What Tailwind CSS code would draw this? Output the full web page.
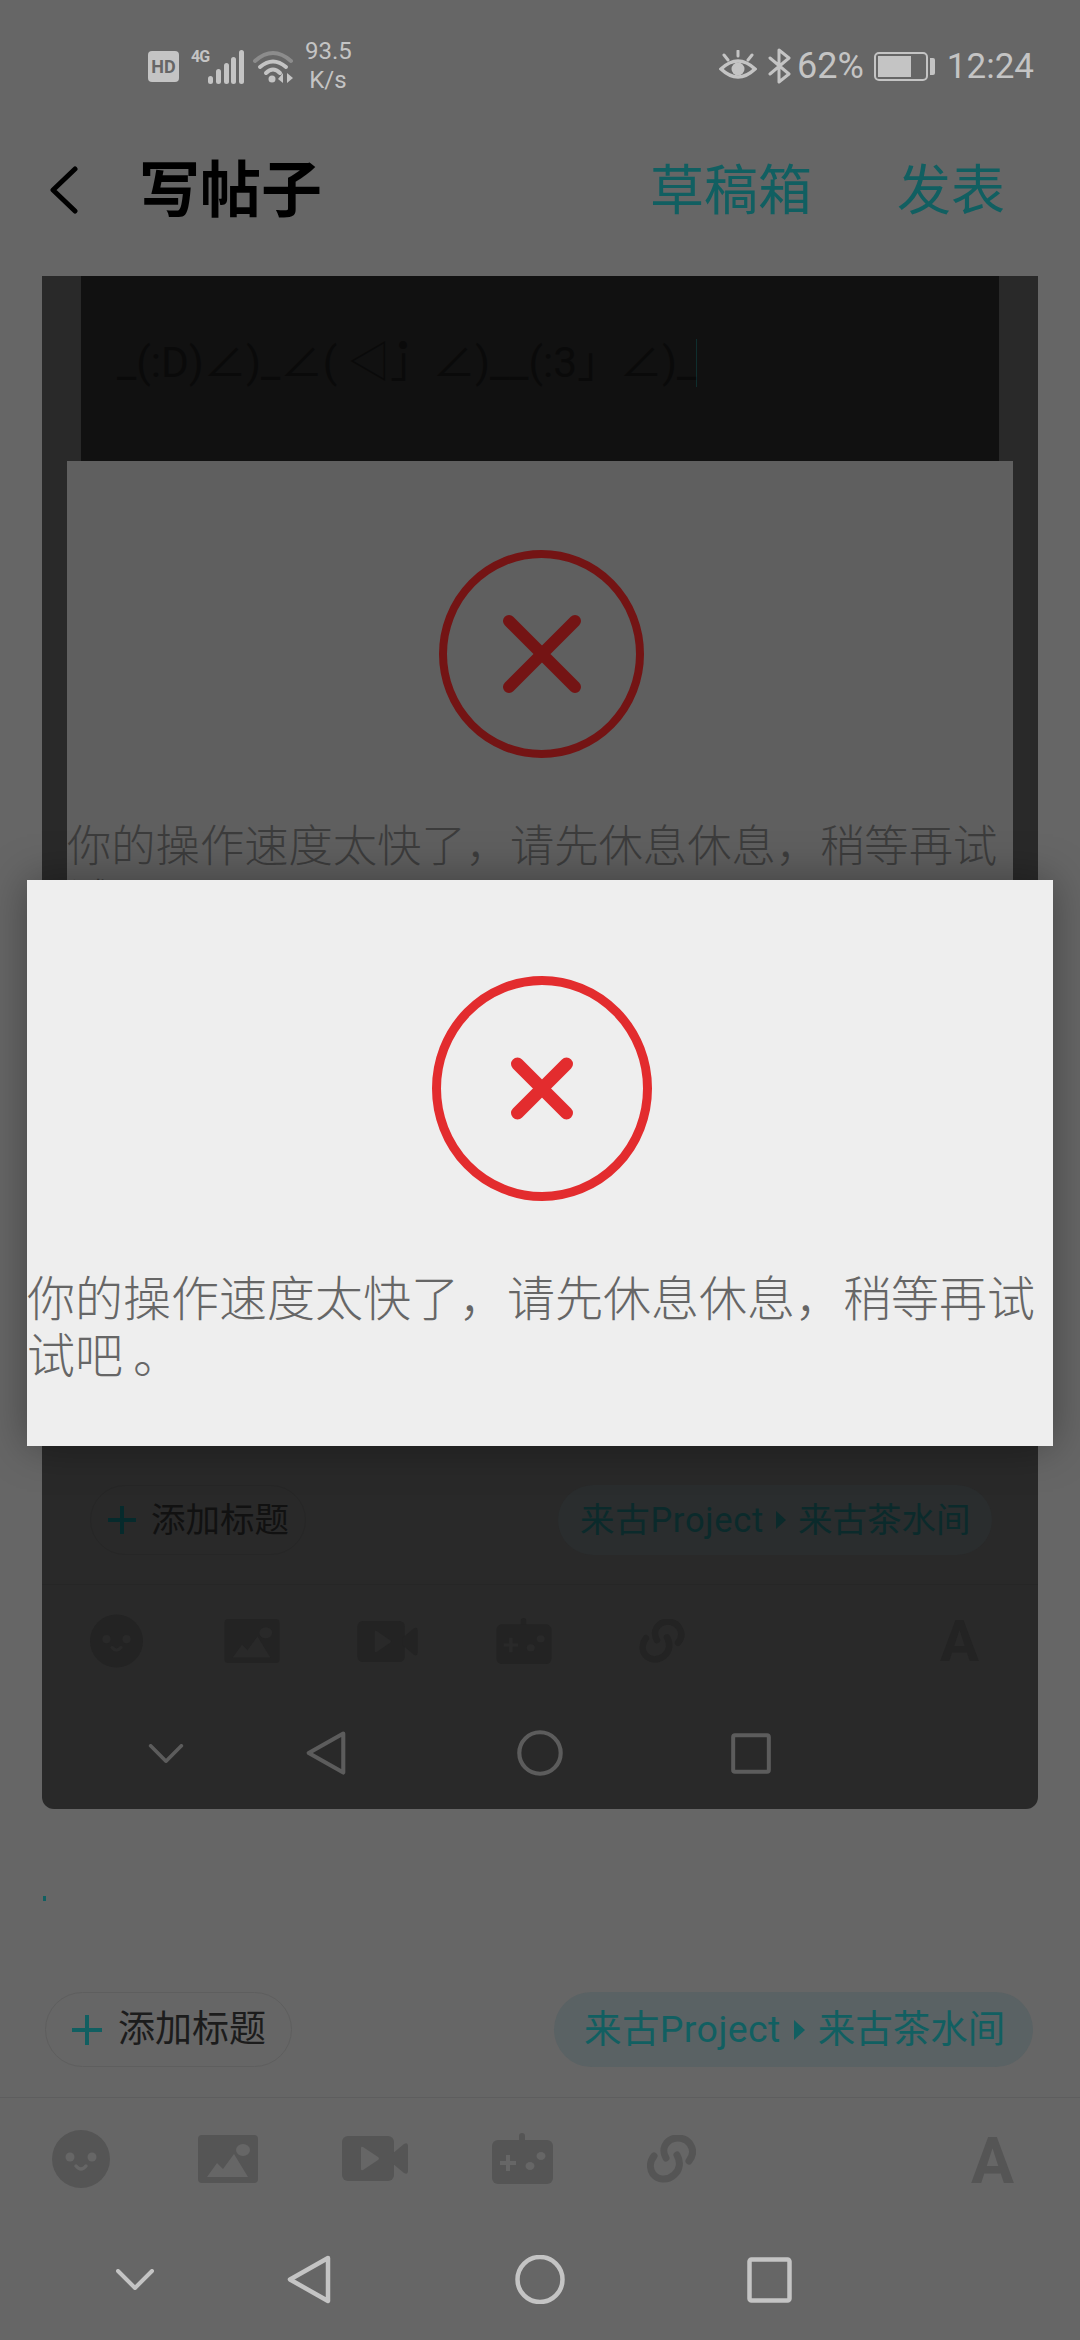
<!DOCTYPE html>
<html lang="zh-CN">
<head>
    <meta charset="UTF-8">
    <meta name="viewport" content="width=device-width, initial-scale=1.0">
    <title>写帖子</title>
    <script src="https://cdn.jsdelivr.net/npm/@tailwindcss/browser@4"></script>
</head>
<body class="bg-[#666666]">
    <!-- shared icons -->
    <svg class="hidden">
        <symbol id="i-smile" viewBox="0 0 58 58">
            <circle cx="29" cy="29" r="29" fill="currentColor"/>
            <circle cx="18" cy="27" r="4.5" fill="var(--bg)"/>
            <circle cx="40" cy="27" r="4.5" fill="var(--bg)"/>
            <path d="M24 36 Q29 42 34 36" fill="none" stroke="var(--bg)" stroke-width="3.5" stroke-linecap="round"/>
        </symbol>
        <symbol id="i-image" viewBox="0 0 60 48">
            <rect width="60" height="48" rx="4" fill="currentColor"/>
            <ellipse cx="45" cy="15" rx="7" ry="6" fill="var(--bg)"/>
            <path d="M9 42 L19 28 L25 34 L36 19 L50 42 Z" fill="var(--bg)"/>
        </symbol>
        <symbol id="i-video" viewBox="0 0 66 45">
            <rect width="52" height="45" rx="6" fill="currentColor"/>
            <path d="M50 18 L62 8 Q66 6 66 10 V35 Q66 39 62 37 L50 27 Z" fill="currentColor"/>
            <path d="M19 12 Q19 10 21 11 L36 21 Q38 22.500 36 24 L21 34 Q19 35 19 33 Z" fill="var(--bg)"/>
        </symbol>
        <symbol id="i-game" viewBox="0 0 61 51">
            <rect x="27" y="0" width="6" height="12" rx="3" fill="currentColor"/>
            <rect y="7" width="61" height="44" rx="6" fill="currentColor"/>
            <path d="M14 22 h4 v6 h6 v4 h-6 v6 h-4 v-6 h-6 v-4 h6 z" fill="var(--bg)"/>
            <ellipse cx="49" cy="23" rx="4.500" ry="4" fill="var(--bg)"/>
            <ellipse cx="38" cy="33" rx="4.500" ry="4" fill="var(--bg)"/>
        </symbol>
        <symbol id="i-link" viewBox="0 0 49 48">
            <path d="M19 23 C15 16 17 9 23 5 C30 1 39 3 43 9 C47 15 46 21 42 26" fill="none" stroke="currentColor" stroke-width="7" stroke-linecap="round"/>
            <path d="M30 20 C34 27 33 35 27 40 C20 46 11 45 6 39 C2 33 3 26 7 21" fill="none" stroke="currentColor" stroke-width="7" stroke-linecap="round"/>
        </symbol>
        <symbol id="i-down" viewBox="0 0 38 21">
            <path d="M2 2 L19 19 L36 2" fill="none" stroke="currentColor" stroke-width="4" stroke-linecap="round" stroke-linejoin="round"/>
        </symbol>
        <symbol id="i-back" viewBox="0 0 44 49">
            <path d="M41 3 L3 24.500 L41 46 Z" fill="none" stroke="currentColor" stroke-width="4.500" stroke-linejoin="round"/>
        </symbol>
        <symbol id="i-home" viewBox="0 0 50 49">
            <circle cx="25" cy="24.500" r="22.500" fill="none" stroke="currentColor" stroke-width="4.500"/>
        </symbol>
        <symbol id="i-recent" viewBox="0 0 45 46">
            <rect x="2.500" y="2.500" width="40" height="41" rx="2" fill="none" stroke="currentColor" stroke-width="4.500"/>
        </symbol>
    </svg>

    <div class="relative w-[1080px] h-[2340px] overflow-hidden flex flex-col bg-[#666666] font-['Roboto','Noto_Sans_CJK_SC',sans-serif]">

        <!-- Status bar -->
        <div class="h-[132px] shrink-0 flex items-center pl-[148px] pr-[46px] text-[#c4c4c4]">
            <div class="w-[31px] h-[31px] mt-[1px] rounded-[4px] bg-[#c4c4c4] text-[#666666] text-[18px] leading-[31px] font-bold text-center">HD</div>
            <div class="w-[19px] ml-[12px] mb-[18px] text-[16px] leading-[16px] font-bold tracking-[-1px]">4G</div>
            <svg class="ml-[-2px] mt-[1px]" width="36" height="34" viewBox="0 0 36 34" fill="#c4c4c4">
                <rect x="0" y="26" width="5" height="8" rx="2.500"/>
                <rect x="8" y="19" width="5" height="15" rx="2.500"/>
                <rect x="16" y="13" width="5" height="21" rx="2.500"/>
                <rect x="23" y="7" width="5" height="27" rx="2.500"/>
                <rect x="31" y="0" width="5" height="34" rx="2.500"/>
            </svg>
            <svg class="ml-[9px] mt-[1px]" width="41" height="33" viewBox="0 0 41 33" fill="none" stroke-linecap="round">
                <path d="M2 11 Q20 -5 38 11" stroke="#8c8c8c" stroke-width="4"/>
                <path d="M7 17 Q20 6 33 17" stroke="#c4c4c4" stroke-width="4"/>
                <path d="M13 23 Q20 16 27 23" stroke="#c4c4c4" stroke-width="4"/>
                <circle cx="19" cy="29" r="3.500" fill="#c4c4c4"/>
                <path d="M30 23 V33 L25 29 Z M34 23 V33 L40 28 Z" fill="#c4c4c4"/>
            </svg>
            <div class="w-[46px] ml-[11px] text-center text-[24px] leading-[29px]">93.5<br>K/s</div>

            <svg class="ml-auto" width="38" height="32" viewBox="0 0 38 32" fill="none" stroke="#c4c4c4" stroke-linecap="round">
                <path d="M2 19 Q19 3 36 19 Q19 35 2 19 Z" stroke-width="3.500"/>
                <circle cx="19" cy="19" r="6.500" fill="#c4c4c4" stroke="none"/>
                <path d="M19 1 V6 M5 5 L9 10 M33 5 L29 10" stroke-width="3"/>
            </svg>
            <svg class="ml-[11px]" width="23" height="36" viewBox="0 0 23 36" fill="none" stroke="#c4c4c4" stroke-width="3" stroke-linejoin="round" stroke-linecap="round">
                <path d="M2 10 L21 26 L11 34 V2 L21 10 L2 26"/>
            </svg>
            <span class="ml-[6px] text-[36px] leading-none">62%</span>
            <div class="ml-[10px] w-[54px] h-[29px] rounded-[5px] border-[2px] border-[#c4c4c4] p-[2px]">
                <div class="w-[33px] h-full bg-[#c4c4c4]"></div>
            </div>
            <div class="ml-[2px] w-[5px] h-[17px] rounded-r-[2px] bg-[#c4c4c4]"></div>
            <span class="ml-[12px] text-[35px] leading-none">12:24</span>
        </div>

        <!-- Header -->
        <div class="h-[144px] shrink-0 flex items-center pb-[25px] pl-[50px] pr-[75px]">
            <svg class="mt-[-3px]" width="28" height="48" viewBox="0 0 28 48" fill="none" stroke="#000000" stroke-width="5" stroke-linecap="round" stroke-linejoin="round">
                <path d="M25 3 L3 24 L25 45"/>
            </svg>
            <h1 class="ml-[61px] text-[61px] leading-none font-bold text-black">写帖子</h1>
            <span class="ml-auto text-[54px] leading-none text-[#115f61]">草稿箱</span>
            <span class="ml-[85px] text-[54px] leading-none text-[#115f61]">发表</span>
        </div>

        <!-- Nested screenshot of the same page -->
        <div class="mx-[42px] h-[1533px] shrink-0 rounded-b-[12px] overflow-hidden bg-[#292929] flex flex-col [--bg:#292929]">
            <div class="mx-[39px] h-[185px] shrink-0 bg-[#111111] flex items-center pb-[11px] pl-[36px] text-[42.500px] leading-[48px] text-[#0a0a0a] whitespace-nowrap">
                <span class="border-r border-[#0f2e2e]">_(:D)∠)_∠( ◁̇」∠)__(:3」∠)_</span>
            </div>
            <div class="mx-[25px] h-[600px] shrink-0 bg-[#5f5f5f] flex flex-col">
                <svg class="mt-[89px] ml-[372px] shrink-0" width="205" height="208" viewBox="0 0 205 208" fill="none" stroke="#741414">
                    <ellipse cx="102.500" cy="104" rx="98.500" ry="100" stroke-width="8"/>
                    <path d="M70 71 L136 137 M136 71 L70 137" stroke-width="12" stroke-linecap="round"/>
                </svg>
                <p class="mt-[62px] text-[44.300px] leading-[54px] font-light text-[#3c3c3c]">你的操作速度太快了，请先休息休息，稍等再试试吧。</p>
            </div>

            <div class="mt-auto px-[48px] flex justify-between">
                <div class="w-[216px] h-[70px] rounded-full border border-[#262626] flex items-center pl-[17px]">
                    <svg width="28" height="28" viewBox="0 0 28 28" fill="#062a2c"><path d="M12 0 h4 v12 h12 v4 h-12 v12 h-4 v-12 h-12 v-4 h12 z"/></svg>
                    <span class="ml-[15px] text-[34.500px] leading-none text-[#111111]">添加标题</span>
                </div>
                <div class="w-[434px] h-[70px] mr-[-2px] rounded-full bg-[#2a2d2e] flex items-center pl-[22px] text-[34.500px] leading-none text-[#0b2a2b]">
                    <span class="tracking-[0.700px]">来古Project</span>
                    <svg class="mx-[12px]" width="10" height="18" viewBox="0 0 10 18" fill="#0b2a2b"><path d="M0 0 L10 9 L0 18 Z"/></svg>
                    <span>来古茶水间</span>
                </div>
            </div>
            <div class="mt-[29px] h-px bg-[#262626]"></div>
            <div class="h-[112px] shrink-0 text-[#232323] flex items-center">
                <svg class="ml-[48px]" width="53" height="54"><use href="#i-smile"/></svg>
                <svg class="ml-[81px]" width="56" height="44"><use href="#i-image"/></svg>
                <svg class="ml-[77px]" width="61" height="41"><use href="#i-video"/></svg>
                <svg class="ml-[78px]" width="56" height="46"><use href="#i-game"/></svg>
                <svg class="ml-[87px]" width="46" height="44"><use href="#i-link"/></svg>
                <span class="ml-[255px] text-[58px] leading-none font-bold">A</span>
            </div>
            <div class="h-[112px] shrink-0 text-[#5c5c5c] flex items-center">
                <svg class="ml-[106px] mt-[1px]" width="36" height="19"><use href="#i-down"/></svg>
                <svg class="ml-[122px]" width="40" height="46"><use href="#i-back"/></svg>
                <svg class="ml-[171px]" width="46" height="46"><use href="#i-home"/></svg>
                <svg class="ml-[167px]" width="42" height="41"><use href="#i-recent"/></svg>
            </div>
        </div>

        <!-- Editor caret -->
        <div class="mt-[87px] ml-[43px] w-[3px] h-[5px] bg-[#115f61] shrink-0"></div>

        <!-- Title and board chips -->
        <div class="mt-[91px] pl-[45px] pr-[47px] flex justify-between shrink-0">
            <div class="w-[247px] h-[75px] rounded-full border border-[#5e5e5e] flex items-center pl-[26px]">
                <svg width="30" height="30" viewBox="0 0 30 30" fill="#115f61"><path d="M13 0 h4 v13 h13 v4 h-13 v13 h-4 v-13 h-13 v-4 h13 z"/></svg>
                <span class="ml-[16px] text-[37px] leading-none text-[#1c1c1c]">添加标题</span>
            </div>
            <div class="w-[479px] h-[75px] rounded-full bg-[#5a6264] flex items-center pl-[30px] text-[37.500px] leading-none text-[#115f61]">
                <span class="tracking-[0.400px]">来古Project</span>
                <svg class="mx-[13px]" width="11" height="20" viewBox="0 0 11 20" fill="#115f61"><path d="M0 0 L11 10 L0 20 Z"/></svg>
                <span>来古茶水间</span>
            </div>
        </div>
        <div class="mt-[30px] h-px bg-[#5e5e5e] shrink-0"></div>

        <!-- Toolbar -->
        <div class="h-[121px] shrink-0 text-[#555555] flex items-center [--bg:#666666]">
            <svg class="ml-[52px]" width="58" height="58"><use href="#i-smile"/></svg>
            <svg class="ml-[88px]" width="60" height="48"><use href="#i-image"/></svg>
            <svg class="ml-[84px]" width="66" height="45"><use href="#i-video"/></svg>
            <svg class="ml-[84px]" width="61" height="51"><use href="#i-game"/></svg>
            <svg class="ml-[94px]" width="49" height="48"><use href="#i-link"/></svg>
            <span class="ml-[275px] mt-[6px] text-[64px] leading-none font-bold">A</span>
        </div>

        <!-- Navigation bar -->
        <div class="flex-1 text-[#c4c4c4] flex items-center">
            <svg class="ml-[116px]" width="38" height="21"><use href="#i-down"/></svg>
            <svg class="ml-[133px]" width="44" height="49"><use href="#i-back"/></svg>
            <svg class="ml-[184px]" width="50" height="49"><use href="#i-home"/></svg>
            <svg class="ml-[182px]" width="45" height="46"><use href="#i-recent"/></svg>
        </div>

        <!-- Error dialog -->
        <div class="absolute left-[27px] top-[880px] w-[1026px] h-[566px] bg-[#eeeeee] shadow-[0_0_40px_rgba(0,0,0,0.35)] flex flex-col">
            <svg class="mt-[96px] ml-[405px] shrink-0" width="220" height="225" viewBox="0 0 220 225" fill="none" stroke="#e32c2e">
                <ellipse cx="110" cy="112.500" rx="105.500" ry="108" stroke-width="9"/>
                <path d="M85.500 88 L134.500 137 M134.500 88 L85.500 137" stroke-width="13" stroke-linecap="round"/>
            </svg>
            <div class="mt-[70px] text-[48px] leading-[57px] font-light text-[#666666]">
                <p>你的操作速度太快了，请先休息休息，稍等再试</p>
                <p><span>试吧</span><span class="ml-[10px]">。</span></p>
            </div>
        </div>
    </div>
</body>
</html>
